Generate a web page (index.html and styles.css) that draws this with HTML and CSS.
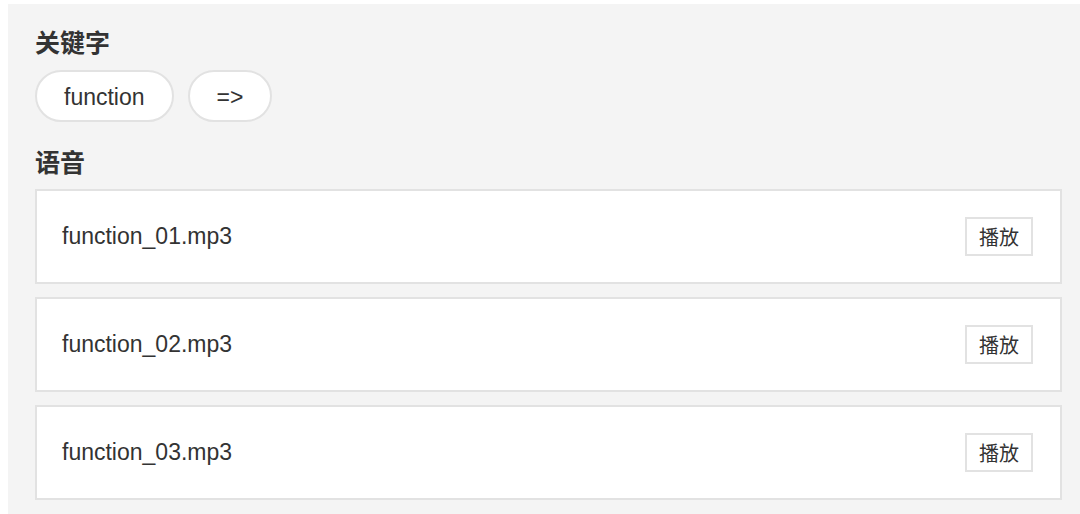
FILE: index.html
```html
<!DOCTYPE html>
<html lang="zh">
<head>
<meta charset="utf-8">
<link rel="stylesheet" href="styles.css">
</head>
<body>
<div class="panel">
  <h2 class="title">关键字</h2>
  <div class="tags">
    <span class="tag">function</span>
    <span class="tag">=&gt;</span>
  </div>
  <h2 class="title title-voice">语音</h2>
  <div class="list">
    <div class="item"><span class="name">function_01.mp3</span><button class="play">播放</button></div>
    <div class="item"><span class="name">function_02.mp3</span><button class="play">播放</button></div>
    <div class="item"><span class="name">function_03.mp3</span><button class="play">播放</button></div>
  </div>
</div>
</body>
</html>
```
FILE: styles.css
```css
html, body {
  height: 100%;
}
body {
  margin: 4px 0 0 8px;
  font-family: "Liberation Sans", "Noto Sans CJK SC", sans-serif;
  color: #333;
  background: #fff;
}
.panel {
  box-sizing: border-box;
  min-height: calc(100% - 4px);
  background: #f4f4f4;
  padding: 21px 18px 14px 27px;
}
.title {
  margin: 0;
  font-size: 25px;
  line-height: 36px;
  font-weight: bold;
  color: #333;
}
.tags {
  display: flex;
  gap: 14px;
  margin-top: 9px;
}
.tag {
  box-sizing: border-box;
  height: 52px;
  padding: 0 27px;
  border: 2px solid #e2e2e2;
  border-radius: 26px;
  background: #fff;
  font-size: 23px;
  display: flex;
  align-items: center;
  padding-top: 2px;
}
.title-voice {
  margin-top: 23px;
}
.list {
  display: flex;
  flex-direction: column;
  gap: 13px;
  margin-top: 8px;
}
.item {
  box-sizing: border-box;
  height: 95px;
  background: #fff;
  border: 2px solid #e2e2e2;
  display: flex;
  align-items: center;
  justify-content: space-between;
  padding: 0 27px 0 25px;
}
.name {
  font-size: 23px;
}
.play {
  box-sizing: border-box;
  height: 39px;
  width: 68px;
  padding: 0;
  border: 2px solid #e2e2e2;
  background: #fff;
  color: #333;
  font-family: "Noto Sans CJK SC", sans-serif;
  font-size: 20px;
  line-height: 1;
}
```
